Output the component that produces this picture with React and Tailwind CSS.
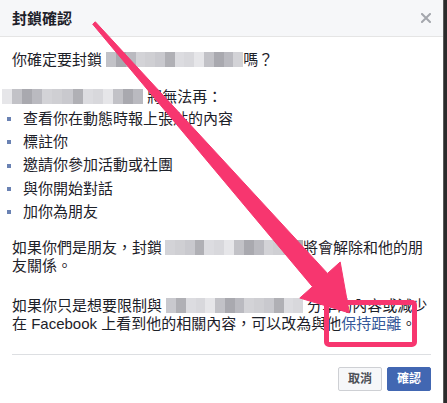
const shades = [
  'bg-[#dcdce0]',
  'bg-[#c2c2c7]',
  'bg-[#d3d3d7]',
  'bg-[#b0b0b5]',
  'bg-[#e6e6e9]',
  'bg-[#babac0]',
  'bg-[#c9c9ce]',
  'bg-[#d8d8dc]',
  'bg-[#a9a9af]',
  'bg-[#cfcfd3]',
];

const Blur = ({ cells, seed, className }) => (
  <span className={`inline-flex h-[15px] align-[-2px] ${className}`}>
    {Array.from({ length: cells }).map((_, i) => (
      <span key={i} className={`h-full flex-1 ${shades[(i * 7 + seed) % shades.length]}`} />
    ))}
  </span>
);

const items = ['查看你在動態時報上張貼的內容', '標註你', '邀請你參加活動或社團', '與你開始對話', '加你為朋友'];

export default function App() {
  return (
    <div className="relative flex h-[403px] w-[447px] overflow-hidden bg-[#303030] font-['Liberation_Sans','Noto_Sans_CJK_TC',sans-serif] text-[15px] text-[#1d2129]">
      <div className="flex w-[443px] flex-col bg-white">
        <div className="flex h-[37px] shrink-0 items-center justify-between border-b border-[#e5e5e5] bg-[#f6f7f9] pl-3 pr-3">
          <h1 className="text-[15px] font-bold leading-none">封鎖確認</h1>
          <svg width="10" height="10" viewBox="0 0 10 10" className="text-[#a4a7ad]">
            <path d="M1 1 9 9M9 1 1 9" stroke="currentColor" strokeWidth="2" strokeLinecap="square" />
          </svg>
        </div>

        <div className="px-3 pt-[14px]">
          <p className="leading-[18.5px]">
            你確定要封鎖 <Blur cells={14} seed={1} className="w-[137px]" />嗎？
          </p>
          <p className="mt-[18.5px] leading-[18.5px]">
            <Blur cells={14} seed={4} className="-ml-[10px] w-[141px]" /> 將無法再：
          </p>
          <ul className="-ml-[5px] mt-px">
            {items.map((t) => (
              <li key={t} className="flex h-[23.25px] items-center">
                <span className="h-[4px] w-[4px] shrink-0 bg-[#6a82b3]" />
                <span className="ml-[12px]">{t}</span>
              </li>
            ))}
          </ul>
          <p className="mt-[15px] leading-[18.5px]">
            如果你們是朋友，封鎖「<Blur cells={14} seed={2} className="-ml-[12px] w-[138px]" />將會解除和他的朋
            <br />
            友關係。
          </p>
          <p className="mt-[21px] leading-[18.5px]">
            如果你只是想要限制與 <Blur cells={14} seed={6} className="w-[137px]" /> 分享的內容或減少
            <br />
            在 Facebook 上看到他的相關內容，可以改為與他<a className="text-[#365899]">保持距離</a>。
          </p>
        </div>

        <div className="mx-3 mt-[20.5px] border-t border-[#dddfe2]" />

        <div className="flex justify-end gap-[5px] px-3 pt-3">
          <button className="h-[24px] rounded-[2px] border border-[#ced0d4] bg-[#f6f7f9] px-[9px] text-[12px] font-bold text-[#4b4f56]">
            取消
          </button>
          <button className="h-[24px] rounded-[2px] border border-[#4267b2] bg-[#4267b2] px-[9px] text-[12px] font-bold text-white">
            確認
          </button>
        </div>
      </div>
      <div className="flex-1 border-l border-[#5a5a5a] bg-[#2b2b2b]" />

      <svg className="pointer-events-none absolute left-0 top-0" width="447" height="403" viewBox="0 0 447 403">
        <polygon
          points="95.3,21.8 327.5,273.4 340.2,262 349.3,312.9 299.8,298 312.5,286.7 92.7,24.2"
          fill="#f7366f"
          stroke="#f7366f"
          strokeWidth="1"
          strokeLinejoin="round"
        />
      </svg>
      <div className="pointer-events-none absolute left-[324px] top-[300px] h-[47px] w-[93px] rounded-[5px] border-[5px] border-[#f7366f]" />
    </div>
  );
}
